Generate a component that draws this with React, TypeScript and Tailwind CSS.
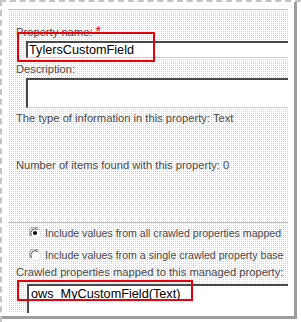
import React from "react";

const font = { fontFamily: '"Liberation Sans", Arial, sans-serif' };

function Radio({ checked }: { checked?: boolean }) {
  return (
    <svg width="12" height="12" viewBox="0 0 12 12" className="shrink-0">
      <circle cx="6" cy="6" r="5.5" fill="#fff" />
      <path d="M1.6 9.4 A5.5 5.5 0 0 1 9.4 1.6" stroke="#808080" strokeWidth="1" fill="none" />
      <path d="M2.6 8.6 A4.3 4.3 0 0 1 8.6 2.6" stroke="#404040" strokeWidth="1" fill="none" />
      <path d="M10.4 2.6 A5.5 5.5 0 0 1 2.6 10.4" stroke="#e0e0e0" strokeWidth="1" fill="none" />
      {checked && <circle cx="6" cy="6" r="2" fill="#000" />}
    </svg>
  );
}

export default function App() {
  return (
    <div
      className="w-[301px] h-[322px] bg-white border-t-2 border-l-2 border-dashed border-[#c4c4c4] overflow-hidden"
      style={font}
    >
      <div className="w-[295px] h-[317px] border-r-[3px] border-b-[3px] border-[#9c9c9c] pl-[6px] pr-[6px] pt-[7px] pb-[3px] flex">
        <div className="relative flex-1 min-w-0 overflow-hidden flex flex-col border-t border-[#c0c0c0] [background-image:linear-gradient(90deg,#fff_1px,transparent_1px),linear-gradient(#fff_1px,#c9d5f4_1px)] [background-size:2px_2px] text-[11.2px] leading-[13px] text-[#4a4a4a]">
          <div className="mt-[15px] pl-2">
            Property name: <span className="text-[#e00000] text-[14px] leading-[13px]">*</span>
          </div>
          <div className="mt-[2px] ml-[18px] h-[17px] bg-white border-t-2 border-l-2 border-[#4a4a4a] border-b border-b-[#c8c8c8] pl-[1px] text-[12.7px] leading-[14px] text-black flex items-center">
            TylersCustomField
          </div>
          <div className="mt-[5px] pl-2">Description:</div>
          <div className="mt-[2px] ml-[18px] h-[30px] bg-white border-t-2 border-l-2 border-[#4a4a4a] border-b border-b-[#c8c8c8]" />
          <div className="mt-[4px] pl-2">The type of information in this property: Text</div>
          <div className="mt-[34px] pl-2">Number of items found with this property: 0</div>
          <div className="mt-[50px] h-px bg-[#c4c4c4]" />
          <div className="mt-[2px] ml-[21px] h-4 flex items-center gap-1 whitespace-nowrap text-[10.6px]">
            <Radio checked />
            <span>Include values from all crawled properties mapped</span>
          </div>
          <div className="mt-[6px] ml-[21px] h-4 flex items-center gap-1 whitespace-nowrap text-[10.6px]">
            <Radio />
            <span>Include values from a single crawled property base</span>
          </div>
          <div className="mt-[3px] pl-2 whitespace-nowrap">Crawled properties mapped to this managed property:</div>
          <div className="mt-[5px] ml-[19px] flex-1 bg-white border-t-2 border-l-2 border-[#4a4a4a] pl-[2px] pt-[1px] text-[12.7px] leading-[14px] text-black">
            ows_MyCustomField(Text)
          </div>

          <div className="absolute left-[9px] top-[22px] w-[138px] h-[30px] border-2 border-[#e8000b]" />
          <div className="absolute left-[9px] top-[270px] w-[176px] h-[21px] border-2 border-[#e8000b]" />
        </div>
      </div>
    </div>
  );
}
